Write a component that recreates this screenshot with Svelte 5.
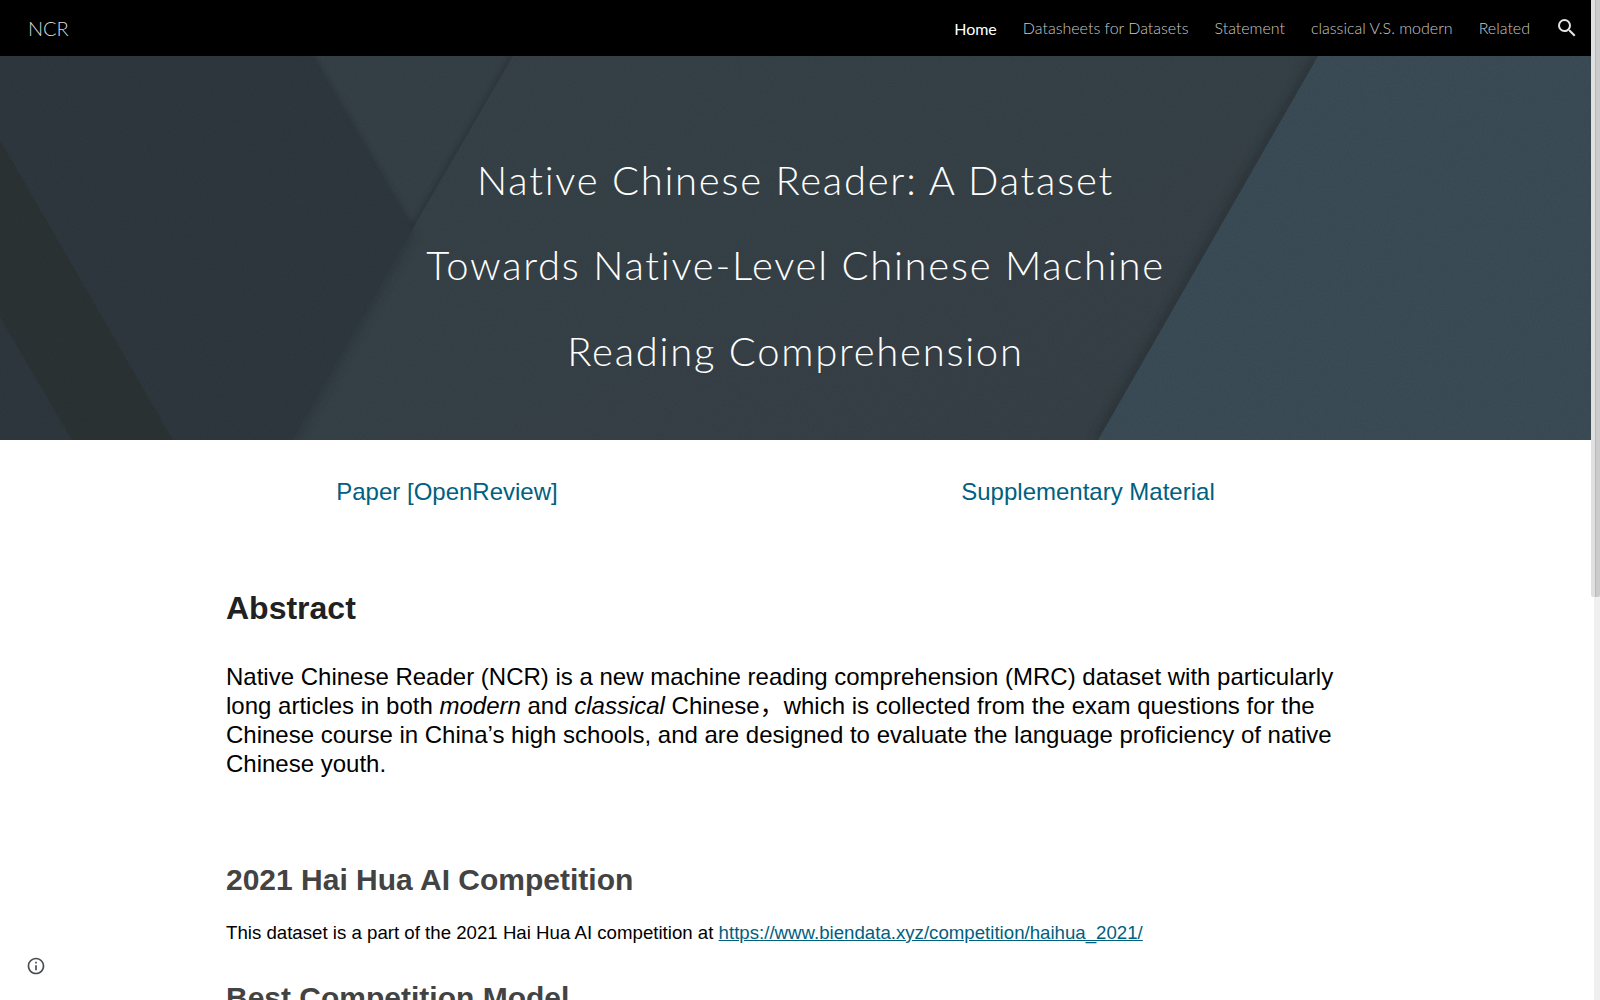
<script>
  const navItems = ["Datasheets for Datasets", "Statement", "classical V.S. modern", "Related"];
  const titleLines = [
    "Native Chinese Reader: A Dataset",
    "Towards Native-Level Chinese Machine",
    "Reading Comprehension",
  ];
</script>

<div class="window">
  <div class="page">
    <header class="topbar">
      <a class="brand" href="#top">NCR</a>
      <nav>
        <a class="current" href="#top">Home</a>
        {#each navItems as item}
          <a href="#top">{item}</a>
        {/each}
        <svg class="search" viewBox="0 0 24 24" width="24" height="24" aria-label="Search">
          <path fill="currentColor" d="M15.5 14h-.79l-.28-.27A6.47 6.47 0 0 0 16 9.5 6.5 6.5 0 1 0 9.5 16c1.61 0 3.09-.59 4.23-1.57l.27.28v.79l5 4.99L20.49 19l-4.99-5zm-6 0C7.01 14 5 11.99 5 9.5S7.01 5 9.5 5 14 7.01 14 9.5 11.99 14 9.5 14z" />
        </svg>
      </nav>
    </header>

    <section class="hero">
      <svg class="facets" viewBox="0 0 1591 384" preserveAspectRatio="none" aria-hidden="true">
        <defs>
          <filter id="soft" x="-20%" y="-20%" width="140%" height="140%">
            <feGaussianBlur stdDeviation="5" />
          </filter>
          <filter id="softer" x="-20%" y="-20%" width="140%" height="140%">
            <feGaussianBlur stdDeviation="2.5" />
          </filter>
          <filter id="grain" x="0" y="0" width="100%" height="100%">
            <feTurbulence type="fractalNoise" baseFrequency="0.7" numOctaves="2" seed="4" />
            <feColorMatrix values="0 0 0 0 0  0 0 0 0 0  0 0 0 0 0  0 0 0 0.9 -0.35" />
          </filter>
          <linearGradient id="mid" x1="0" y1="0" x2="1" y2="1">
            <stop offset="0" stop-color="#364147" />
            <stop offset="1" stop-color="#353f45" />
          </linearGradient>
        </defs>
        <rect width="1591" height="384" fill="#353f46" />
        <path d="M311 0 L412 174 L513 0" stroke="#20262a" stroke-width="6" opacity=".4" filter="url(#softer)" fill="none" />
        <polygon points="513,0 1318,0 1098,384 292,384 412,174" fill="url(#mid)" />
        <path d="M1318 0 L1098 384" stroke="#1e2326" stroke-width="10" opacity=".38" filter="url(#soft)" fill="none" />
        <path d="M412 174 L292 384" stroke="#1e2326" stroke-width="8" opacity=".35" filter="url(#soft)" fill="none" />
        <polygon points="1318,0 1591,0 1591,384 1098,384" fill="#3a4b55" />
        <polygon points="0,0 311,0 412,174 292,384 0,384" fill="#2e373e" />
        <polygon points="0,84 173,384 72,384 0,261" fill="#2a3234" />
        <rect width="1591" height="384" filter="url(#grain)" opacity=".12" />
      </svg>
      <h1>
        {#each titleLines as line}
          <span>{line}</span>
        {/each}
      </h1>
    </section>

    <main>
      <div class="links">
        <a href="#top">Paper [OpenReview]</a>
        <a href="#top">Supplementary Material</a>
      </div>
      <h2>Abstract</h2>
      <p class="lead">
        Native Chinese Reader (NCR) is a new machine reading comprehension (MRC) dataset with particularly long articles in both <em>modern</em> and <em>classical</em> Chinese，which is collected from the exam questions for the Chinese course in China’s high schools, and are designed to evaluate the language proficiency of native Chinese youth.
      </p>
      <h3>2021 Hai Hua AI Competition</h3>
      <p class="body">
        This dataset is a part of the 2021 Hai Hua AI competition at <a href="#top">https://www.biendata.xyz/competition/haihua_2021/</a>
      </p>
      <h3 class="next">Best Competition Model</h3>
    </main>
  </div>

  <div class="scrollbar"><div class="thumb"></div></div>

  <svg class="info" viewBox="0 0 24 24" width="20" height="20" aria-label="Site information">
    <path fill="currentColor" d="M11 7h2v2h-2zm0 4h2v6h-2zm1-9C6.48 2 2 6.48 2 12s4.48 10 10 10 10-4.48 10-10S17.52 2 12 2zm0 18c-4.41 0-8-3.59-8-8s3.59-8 8-8 8 3.59 8 8-3.59 8-8 8z" />
  </svg>
</div>

<style>
  :global(body) {
    margin: 0;
    background: #fff;
  }
  .window {
    position: relative;
    display: flex;
    height: 1000px;
    overflow: hidden;
  }
  .page {
    flex: 1;
    min-width: 0;
  }
  .topbar {
    height: 56px;
    background: #000;
    display: flex;
    align-items: center;
    justify-content: space-between;
    padding: 0 12px 0 28px;
    font-family: Lato, sans-serif;
    font-weight: 300;
  }
  .brand {
    color: #d9d9d9;
    font-size: 20px;
    text-decoration: none;
    margin-top: -1px;
  }
  nav {
    display: flex;
    align-items: center;
    gap: 26px;
  }
  nav a {
    color: #c8c8c8;
    font-size: 16px;
    text-decoration: none;
    padding-bottom: 2px;
  }
  nav a.current {
    color: #fff;
    font-weight: 400;
    padding: 0;
  }
  .search {
    color: #e4e4e4;
    margin-left: -1px;
  }
  .hero {
    position: relative;
    height: 384px;
    box-sizing: border-box;
    padding-top: 36px;
    background: #363f45;
    display: flex;
    align-items: center;
    justify-content: center;
    overflow: hidden;
  }
  .facets {
    position: absolute;
    inset: 0;
    width: 100%;
    height: 100%;
  }
  h1 {
    position: relative;
    margin: 0;
    display: flex;
    flex-direction: column;
    align-items: center;
    color: #fff;
    font-family: Lato, sans-serif;
    font-weight: 300;
    font-size: 40px;
    line-height: 85.5px;
    letter-spacing: 1.75px;
  }
  main {
    padding: 0 226px;
    font-family: "Liberation Sans", Arial, "Noto Sans CJK SC", sans-serif;
  }
  .links {
    display: grid;
    grid-template-columns: 442px 440px;
    column-gap: 200px;
    padding-top: 37px;
    text-align: center;
    font-size: 24px;
    line-height: 30px;
  }
  .links a {
    color: #006080;
    text-decoration: none;
  }
  h2 {
    margin: 81px 0 0;
    color: #212121;
    font-size: 32px;
    line-height: 40px;
  }
  .lead {
    margin: 34px 0 0;
    color: #000;
    font-size: 24px;
    line-height: 29px;
  }
  .lead em {
    font-style: italic;
  }
  h3 {
    margin: 83px 0 0;
    color: #434343;
    font-size: 30px;
    line-height: 38px;
  }
  .body {
    margin: 21px 0 0;
    color: #000;
    font-size: 18.67px;
    line-height: 26px;
  }
  .body a {
    color: #006080;
  }
  h3.next {
    margin-top: 33px;
  }
  .scrollbar {
    width: 9px;
    flex: none;
    background: linear-gradient(to right, #fff 0 3px, #f0f0f0 3px);
  }
  .thumb {
    height: 597px;
    background: linear-gradient(to right, #e0e0e0 0 4px, #b8b8b8 4px 5px, #cbcbcb 5px);
    border-radius: 0 0 2px 2px;
  }
  .info {
    position: absolute;
    left: 26px;
    top: 956px;
    color: #4a4d50;
  }
</style>
